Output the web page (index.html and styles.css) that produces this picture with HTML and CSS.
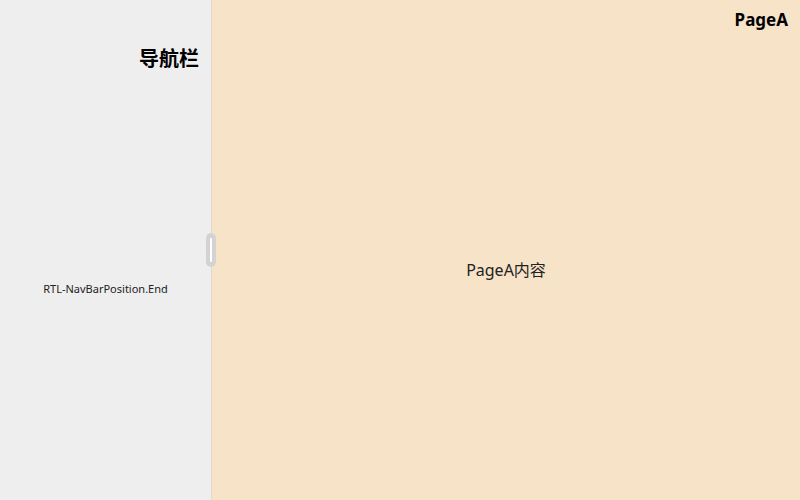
FILE: index.html
```html
<!DOCTYPE html>
<html lang="zh">
<head>
    <meta charset="UTF-8">
    <title>Navigation</title>
    <link rel="stylesheet" href="styles.css">
</head>
<body>
    <div class="nav-wrap">
        <div class="navbar">
            <div class="navbar-title">导航栏</div>
            <div class="navbar-body">
                <p class="navbar-text">RTL-NavBarPosition.End</p>
            </div>
        </div>
        <div class="divider">
            <span class="drag-bar"></span>
        </div>
        <div class="page">
            <div class="page-title">PageA</div>
            <div class="page-body">
                <p class="page-text">PageA内容</p>
            </div>
        </div>
    </div>
</body>
</html>
```

FILE: styles.css
```css
html,body{margin:0;height:100%;}
body{font-family:"Noto Sans","Noto Sans CJK SC",sans-serif;color:#182431;}
.nav-wrap{display:flex;height:100%;}

/* left side bar */
.navbar{width:211px;flex:none;background-color:#eeeeee;display:flex;flex-direction:column;}
.navbar-title{padding:44px 12px 0 0;text-align:right;font-size:20px;line-height:30px;font-weight:700;color:#000;}
.navbar-body{flex:1;display:flex;align-items:center;justify-content:center;padding-top:4px;}
.navbar-text{margin:0;font-size:11px;line-height:16px;color:#222;}

/* split line with drag handle */
.divider{width:1px;flex:none;background-color:#e5d8c6;position:relative;}
.drag-bar{
    position:absolute;
    left:-5px;
    top:233px;
    width:10px;
    height:34px;
    border-radius:5px;
    background-color:#d3d3d3;
}
.drag-bar::after{
    content:"";
    position:absolute;
    left:4px;
    top:5px;
    width:2px;
    height:24px;
    border-radius:1px;
    background-color:#fff;
}

/* content page */
.page{flex:1;background-color:#f7e3c8;display:flex;flex-direction:column;}
.page-title{padding:8px 12px 0 0;text-align:right;font-size:17px;line-height:24px;font-weight:700;color:#000;}
.page-body{flex:1;display:flex;align-items:center;justify-content:center;}
.page-text{margin:0;font-size:16px;line-height:22px;color:#222;position:relative;top:4px;}
```
